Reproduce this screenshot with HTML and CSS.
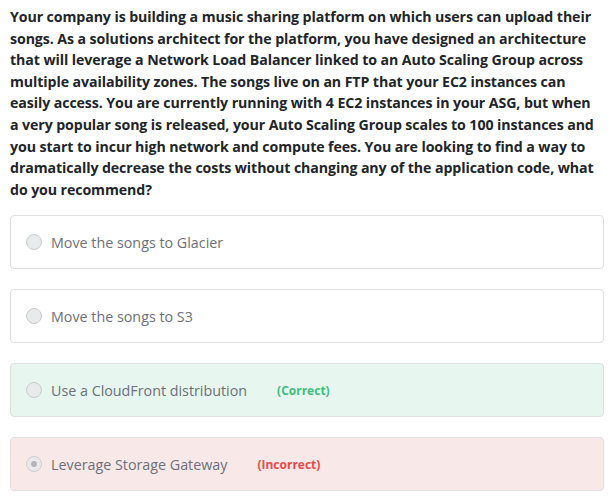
FILE: index.html
```html
<!DOCTYPE html>
<html>
<head>
<meta charset="utf-8">
<link rel="stylesheet" href="styles.css">
</head>
<body>
<div class="quiz">
  <p class="question">Your company is building a music sharing platform on which users can upload their songs. As a solutions architect for the platform, you have designed an architecture that will leverage a Network Load Balancer linked to an Auto Scaling Group across multiple availability zones. The songs live on an FTP that your EC2 instances can easily access. You are currently running with 4 EC2 instances in your ASG, but when a very popular song is released, your Auto Scaling Group scales to 100 instances and you start to incur high network and compute fees. You are looking to find a way to dramatically decrease the costs without changing any of the application code, what do you recommend?</p>
  <div class="options">
    <label class="option"><span class="radio"></span><span class="label">Move the songs to Glacier</span></label>
    <label class="option"><span class="radio"></span><span class="label">Move the songs to S3</span></label>
    <label class="option correct"><span class="radio"></span><span class="label">Use a CloudFront distribution</span><span class="tag tag-correct">(Correct)</span></label>
    <label class="option incorrect"><span class="radio checked"></span><span class="label">Leverage Storage Gateway</span><span class="tag tag-incorrect">(Incorrect)</span></label>
  </div>
</div>
</body>
</html>
```
FILE: styles.css
```css
html, body {
  margin: 0;
  padding: 0;
  background: #ffffff;
}
body {
  font-family: "Open Sans", "Segoe UI", sans-serif;
}
.quiz {
  padding: 6px 11px 0 10px;
}
.question {
  margin: 0 0 15px 0;
  padding-right: 5px;
  font-size: 14.2px;
  font-weight: 700;
  letter-spacing: -0.1px;
  line-height: 21.6px;
  color: #212529;
}
.options {
  display: flex;
  flex-direction: column;
  gap: 20px;
}
.option {
  display: flex;
  align-items: center;
  height: 52px;
  padding: 0 15px;
  border: 1px solid #dedfe2;
  border-radius: 4px;
  background: #fff;
}
.option.correct {
  background: #e7f6ef;
}
.option.incorrect {
  background: #f8e8e8;
}
.radio {
  width: 16px;
  height: 16px;
  border-radius: 50%;
  border: 1px solid #c9cbcf;
  background: #e9eaec;
  margin-right: 9px;
  flex: none;
  box-sizing: border-box;
  position: relative;
}
.radio.checked::after {
  content: "";
  position: absolute;
  left: 4px;
  top: 4px;
  width: 6px;
  height: 6px;
  border-radius: 50%;
  background: #b3b5b9;
}
.label {
  font-size: 14.3px;
  color: #6c707a;
}
.tag {
  font-size: 12px;
  font-weight: 700;
  margin-left: 30px;
}
.tag-correct {
  color: #3cbf7f;
}
.tag-incorrect {
  color: #e84a4a;
}
```
